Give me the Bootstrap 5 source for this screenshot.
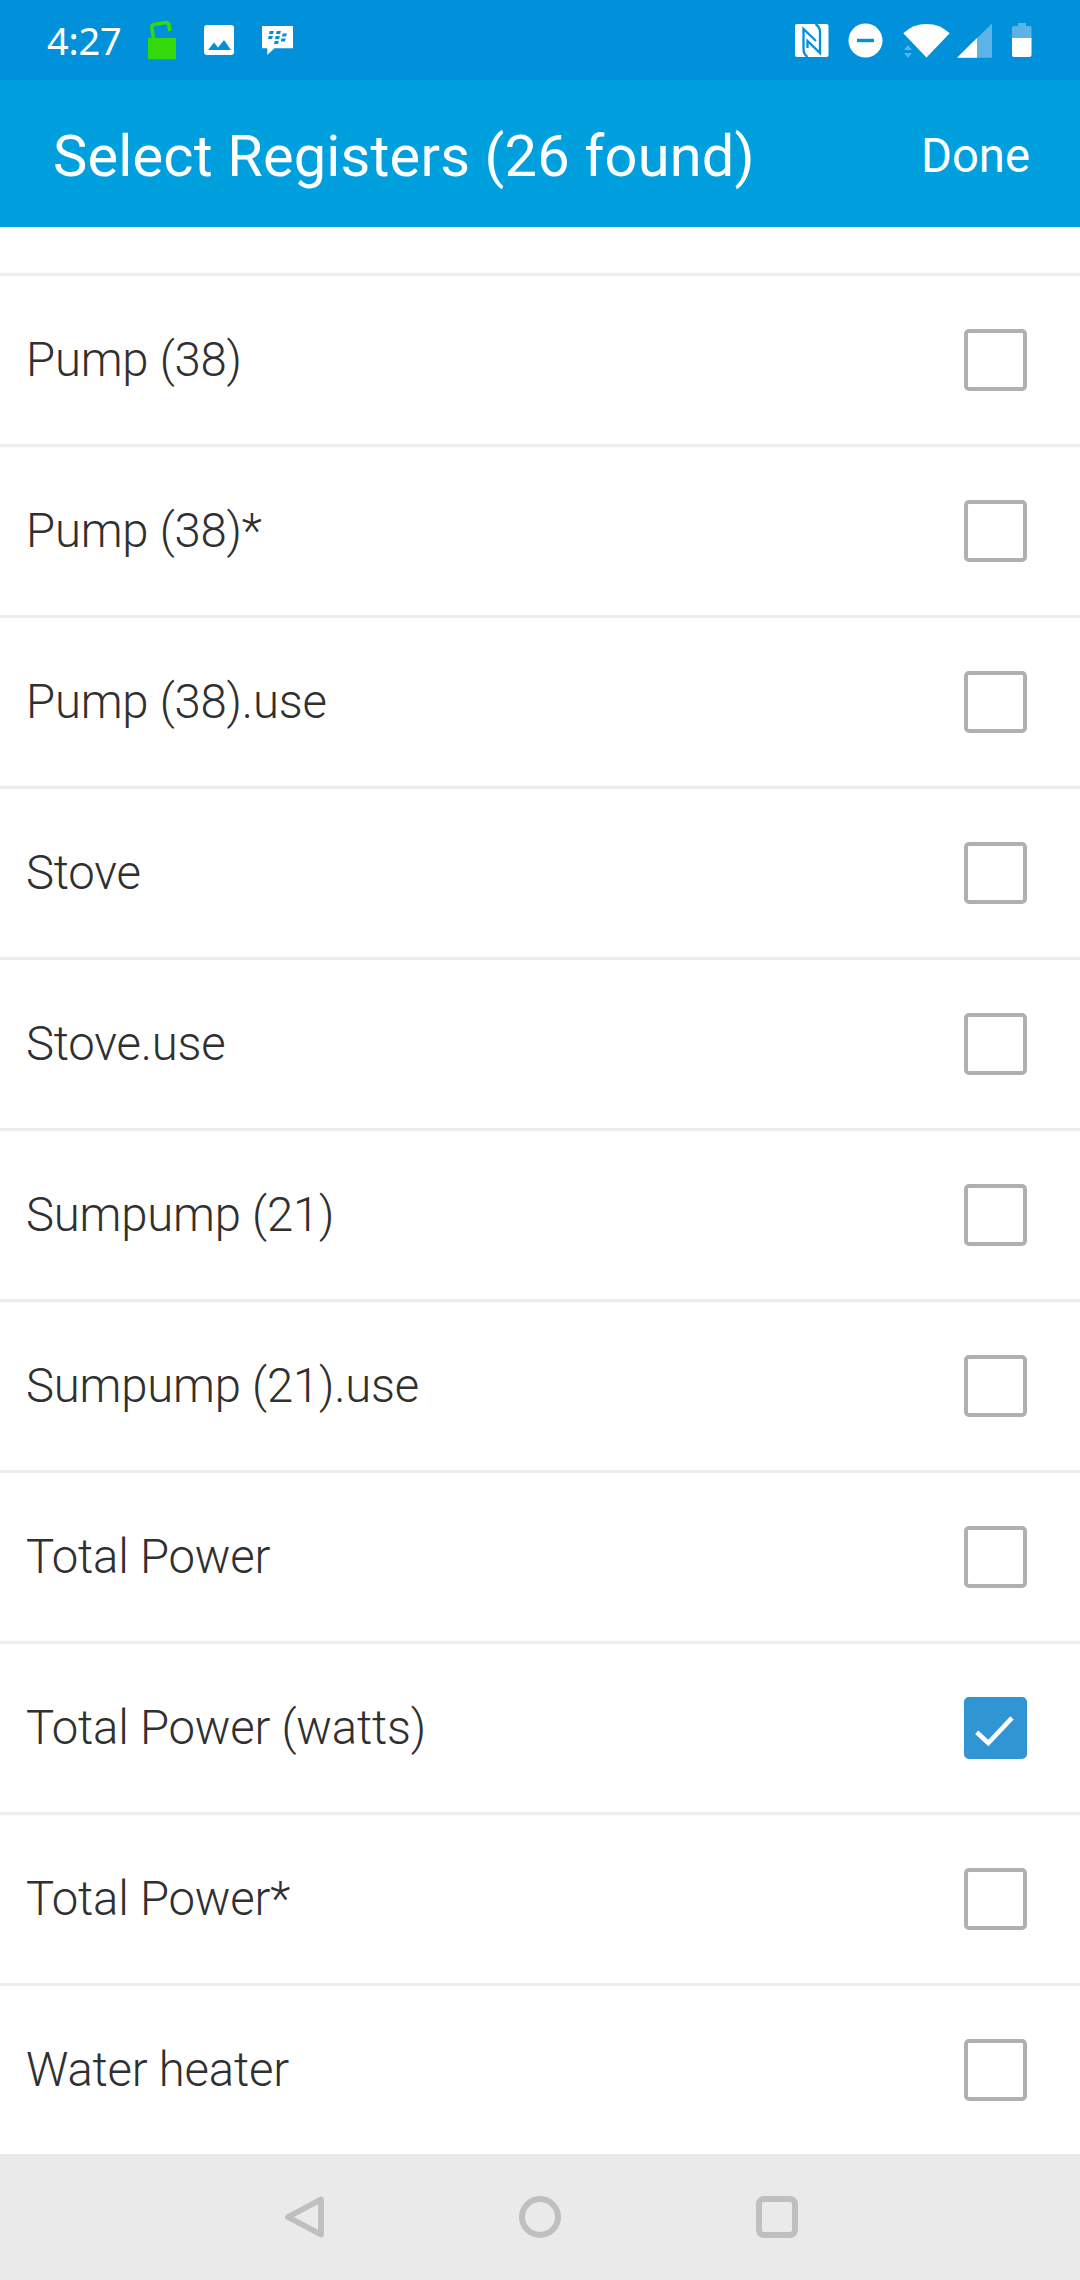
<!DOCTYPE html>
<html lang="en">
<head>
<meta charset="utf-8">
<meta name="viewport" content="width=device-width, initial-scale=1">
<title>Select Registers</title>
<link href="https://cdn.jsdelivr.net/npm/bootstrap@5.3.0/dist/css/bootstrap.min.css" rel="stylesheet">
<style>
body{width:1080px;height:2280px;overflow:hidden;background:#fff;font-family:Roboto,sans-serif;color:#303030}
svg{display:block;flex:none}
.statusbar{height:80px;background:#0091da;padding-left:47px;padding-right:48px}
.clock{font:400 38px/80px "Noto Sans","Open Sans",sans-serif;width:101px;letter-spacing:-.2px}
.apps{gap:28px}
.titlebar{height:147px;background:#009fde;padding:0 50px 0 53px}
.titlebar h1{font-size:57.75px;line-height:68px;font-weight:400;padding-top:4px;letter-spacing:.17px}
.done-btn{font-size:47.25px;line-height:56px;padding:4px 0 0;border:0;color:#fff;font-weight:400}
.done-btn:hover{color:#fff}
.cut-row{height:46px}
.reg{height:171px;border-top:3px solid #ededed;padding:0 53px 0 26px}
.reg-name{font-size:47.25px;font-weight:300;line-height:56px;letter-spacing:-.2px}
.form-check-input.tick{width:63px;height:62px;margin:0;border:4px solid #b0b0b0;border-radius:5px;flex:none}
.form-check-input.tick:checked{border-color:#2f95d3;background-color:#2f95d3;background-size:63px 62px;background-position:center;background-image:url("data:image/svg+xml,%3Csvg xmlns='http://www.w3.org/2000/svg' viewBox='0 0 63 62'%3E%3Cpath d='M12.700 35.300L24.300 46L48 20.800' fill='none' stroke='%23fff' stroke-width='4.600'/%3E%3C/svg%3E")}
.navkeys{height:126px;background:#eaeaea;gap:194.500px}
</style>
<script src="https://cdn.jsdelivr.net/npm/bootstrap@5.3.0/dist/js/bootstrap.bundle.min.js"></script>
</head>
<body class="d-flex flex-column">
<div class="statusbar d-flex align-items-center justify-content-between text-white">
  <div class="d-flex align-items-center">
    <span class="clock">4:27</span>
    <div class="d-flex apps">
      <!-- open padlock -->
      <svg width="28" height="80" viewBox="148 0 28 80"><path d="M148 38h28v21.300h-28z" fill="#33da0b"/><path d="M153.500 39L151.800 27.500Q151.500 25 153.800 24.500L164 22.800Q168 22 169 25L169.800 31" fill="none" stroke="#33da0b" stroke-width="3.600"/></svg>
      <!-- picture -->
      <svg width="30" height="80" viewBox="204 0 30 80"><rect x="204" y="25" width="30" height="30" rx="3" fill="#fff"/><path d="M208 50l6-7.500 4 5 6-7.500 7 10z" fill="#0091da"/></svg>
      <!-- messenger bubble -->
      <svg width="31" height="80" viewBox="262 0 31 80"><path d="M262 26h31v22.300h-18.500l-7.200 6.700v-6.700H262z" fill="#fff"/><path fill="#0091da" d="M269.700 31h4.200l-.8 3h-4.100zM276.700 31h4.200l-.8 3H276zM268.700 36h4.200l-.8 3H268zM275.700 36h4.200l-.8 3H275zM282.700 33.500h4.200l-.8 3H282zM281.500 38.500h4.200l-.8 3h-4.100zM274.700 41h4.200l-.8 3H274z"/></svg>
    </div>
  </div>
  <div class="d-flex">
    <!-- NFC -->
    <svg width="35" height="80" viewBox="794 0 35 80"><rect x="795" y="24" width="33.500" height="33" rx="2" fill="#fff"/><path d="M807.500 57Q803.500 54 803.500 49V29L816 41M815.500 24Q820 27 820 32V53L807.500 41V48" fill="none" stroke="#0091da" stroke-width="2.300"/></svg>
    <!-- do not disturb -->
    <svg width="72" height="80" viewBox="829 0 72 80"><circle cx="865.500" cy="40.500" r="17" fill="#fff"/><path d="M857 40.500h17" stroke="#0091da" stroke-width="3.400"/></svg>
    <!-- wifi with traffic arrows -->
    <svg width="52" height="80" viewBox="901 0 52 80"><path d="M903.300 33.300Q913 24 926.500 24T949.700 33.300L926.500 57.500z" fill="#fff"/><path d="M904 50l4-5 4 5zM904 53h8l-4 5z" fill="#5bb3e7"/></svg>
    <!-- mobile signal -->
    <svg width="42" height="80" viewBox="953 0 42 80"><path d="M992 23.500V57.700H957z" fill="#5bb3e7"/><path d="M977 38V57.700H957z" fill="#fff"/></svg>
    <!-- battery -->
    <svg width="37" height="80" viewBox="995 0 37 80"><path d="M1012 38V28q0-2 2-2h4v-3h8v3h3.500q2 0 2 2v10z" fill="#5bb3e7"/><path d="M1012 38h19.500v17q0 2-2 2H1014q-2 0-2-2z" fill="#fff"/></svg>
  </div>
</div>
<header class="titlebar d-flex align-items-center justify-content-between text-white">
  <h1 class="m-0">Select Registers (26 found)</h1>
  <button class="btn done-btn" type="button">Done</button>
</header>
<main>
  <div class="cut-row"></div>
  <label class="reg d-flex align-items-center justify-content-between"><span class="reg-name">Pump (38)</span><input class="form-check-input tick" type="checkbox"></label>
  <label class="reg d-flex align-items-center justify-content-between"><span class="reg-name">Pump (38)*</span><input class="form-check-input tick" type="checkbox"></label>
  <label class="reg d-flex align-items-center justify-content-between"><span class="reg-name">Pump (38).use</span><input class="form-check-input tick" type="checkbox"></label>
  <label class="reg d-flex align-items-center justify-content-between"><span class="reg-name">Stove</span><input class="form-check-input tick" type="checkbox"></label>
  <label class="reg d-flex align-items-center justify-content-between"><span class="reg-name">Stove.use</span><input class="form-check-input tick" type="checkbox"></label>
  <label class="reg d-flex align-items-center justify-content-between"><span class="reg-name">Sumpump (21)</span><input class="form-check-input tick" type="checkbox"></label>
  <label class="reg d-flex align-items-center justify-content-between"><span class="reg-name">Sumpump (21).use</span><input class="form-check-input tick" type="checkbox"></label>
  <label class="reg d-flex align-items-center justify-content-between"><span class="reg-name">Total Power</span><input class="form-check-input tick" type="checkbox"></label>
  <label class="reg d-flex align-items-center justify-content-between"><span class="reg-name">Total Power (watts)</span><input class="form-check-input tick" type="checkbox" checked></label>
  <label class="reg d-flex align-items-center justify-content-between"><span class="reg-name">Total Power*</span><input class="form-check-input tick" type="checkbox"></label>
  <label class="reg d-flex align-items-center justify-content-between"><span class="reg-name">Water heater</span><input class="form-check-input tick" type="checkbox"></label>
</main>
<nav class="navkeys d-flex align-items-center justify-content-center">
  <svg width="42" height="42" viewBox="0 0 42 42" fill="none" stroke="#bfbfbf" stroke-width="5.800" stroke-linejoin="round"><path d="M38 3.500V38.500L5 21z"/></svg>
  <svg width="42" height="42" viewBox="0 0 42 42" fill="none" stroke="#bfbfbf" stroke-width="6"><circle cx="21" cy="21" r="18"/></svg>
  <svg width="42" height="42" viewBox="0 0 42 42" fill="none" stroke="#bfbfbf" stroke-width="6"><rect x="3" y="3" width="36" height="36" rx="5"/></svg>
</nav>
</body>
</html>
